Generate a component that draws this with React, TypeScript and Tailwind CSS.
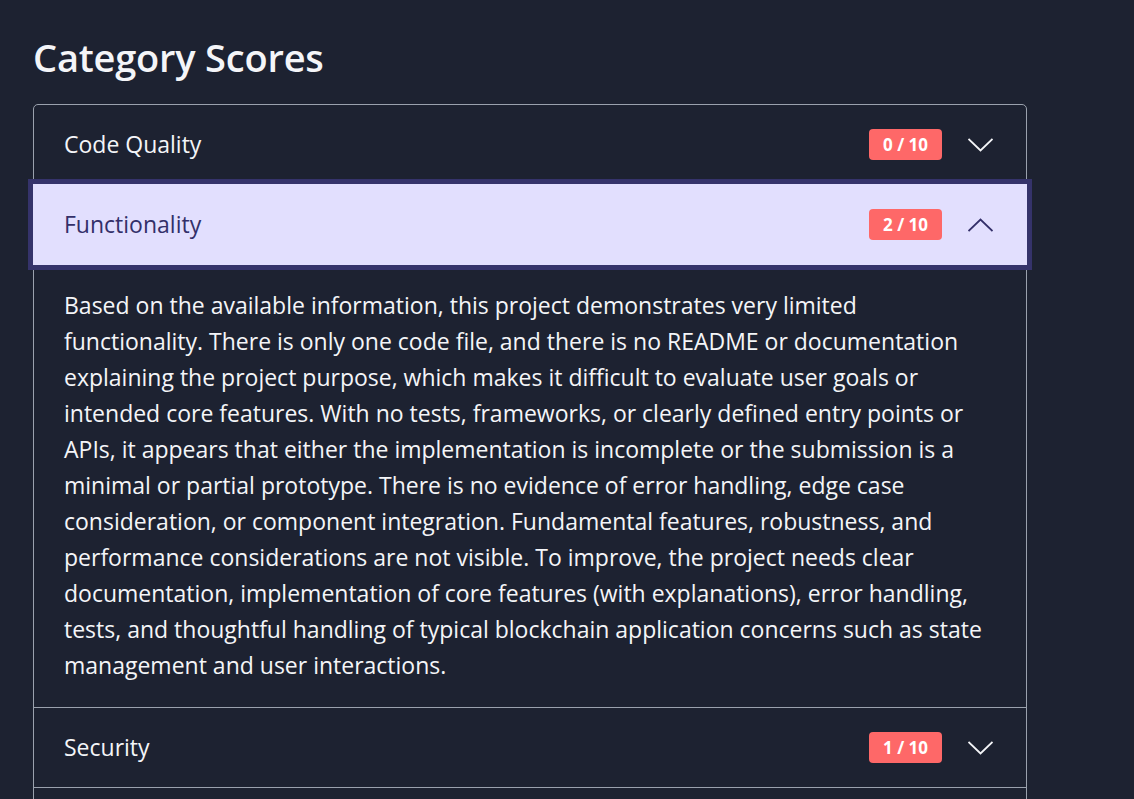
import { useState } from "react";

interface Category {
  name: string;
  score: number;
  summary: string;
}

const categories: Category[] = [
  {
    name: "Code Quality",
    score: 0,
    summary: "",
  },
  {
    name: "Functionality",
    score: 2,
    summary:
      "Based on the available information, this project demonstrates very limited functionality. There is only one code file, and there is no README or documentation explaining the project purpose, which makes it difficult to evaluate user goals or intended core features. With no tests, frameworks, or clearly defined entry points or APIs, it appears that either the implementation is incomplete or the submission is a minimal or partial prototype. There is no evidence of error handling, edge case consideration, or component integration. Fundamental features, robustness, and performance considerations are not visible. To improve, the project needs clear documentation, implementation of core features (with explanations), error handling, tests, and thoughtful handling of typical blockchain application concerns such as state management and user interactions.",
  },
  { name: "Security", score: 1, summary: "" },
  { name: "Documentation", score: 0, summary: "" },
];

function Chevron({ up, className }: { up?: boolean; className?: string }) {
  return (
    <svg width="25" height="14" viewBox="0 0 25 14" fill="none" className={className}>
      <polyline
        points={up ? "0.5,13 12.5,1.5 24.5,13" : "0.5,1 12.5,12.5 24.5,1"}
        stroke="currentColor"
        strokeWidth="1.8"
      />
    </svg>
  );
}

export default function App() {
  const [open, setOpen] = useState<string | null>("Functionality");

  return (
    <div
      className="min-h-screen bg-[#1d2231] pl-[33px] pt-[30px] text-[#f4f5f8]"
      style={{ fontFamily: '"Open Sans", "Noto Sans", sans-serif' }}
    >
      <h2 className="mb-[20px] text-[38px] font-semibold leading-[54px] tracking-[-0.2px]">
        Category Scores
      </h2>
      <div className="w-[994px] rounded-[5px] border border-[#9aa1ad]">
        {categories.map((c, i) => {
          const isOpen = open === c.name;
          return (
            <div key={c.name} className={i > 0 ? "border-t border-[#9aa1ad]" : ""}>
              <button
                onClick={() => setOpen(isOpen ? null : c.name)}
                className={
                  isOpen
                    ? "relative z-10 -mx-px -my-px flex h-[81px] w-[calc(100%+2px)] items-center bg-[#e2dffe] pl-[31px] pr-[34px] text-[#332f69] ring-[5px] ring-[#35336b]"
                    : "flex h-[79px] w-full items-center pl-[30px] pr-[33px] text-left"
                }
              >
                <span className="flex-1 text-left text-[23px]">{c.name}</span>
                <span className="flex h-[31px] w-[73px] items-center justify-center rounded-[4px] bg-[#fe6868] text-[17px] font-bold text-white">
                  {c.score} / 10
                </span>
                <Chevron up={isOpen} className="ml-[26px]" />
              </button>
              {isOpen && c.summary ? (
                <div className="px-[30px] pt-[23px] pb-[24px] text-[23px] leading-[36px]">
                  {c.summary}
                </div>
              ) : null}
            </div>
          );
        })}
      </div>
    </div>
  );
}
